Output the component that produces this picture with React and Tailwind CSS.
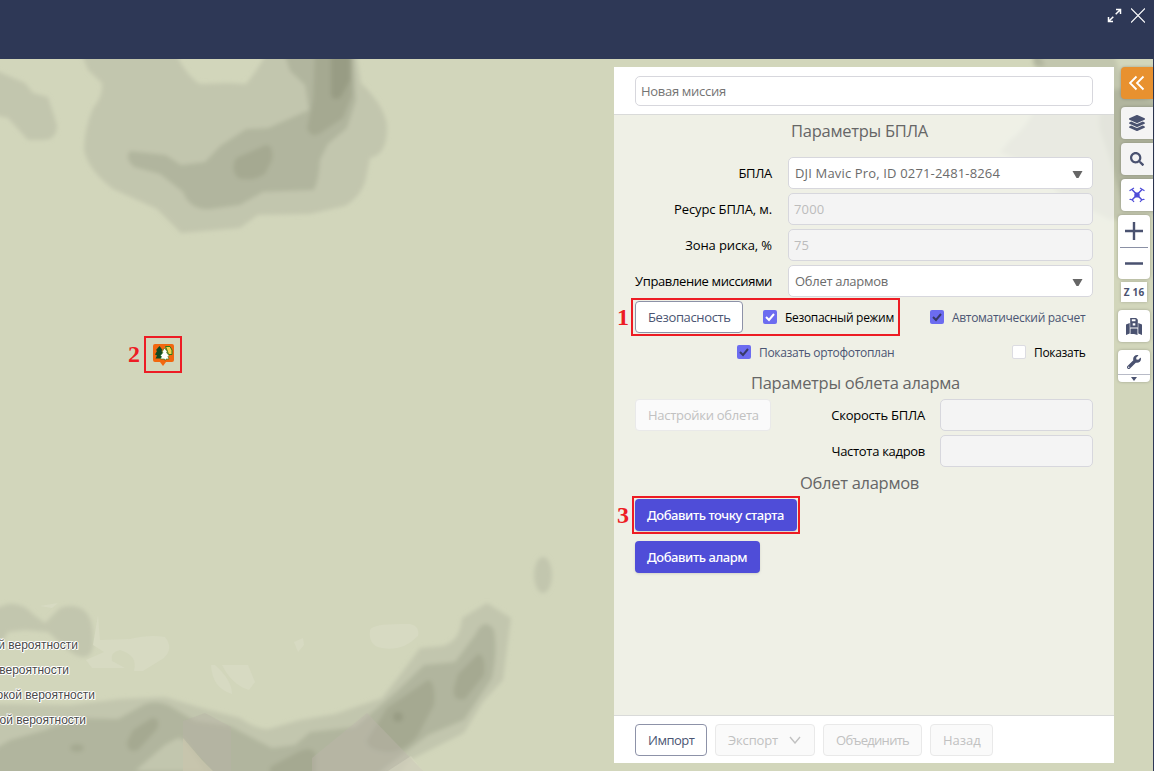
import { FaLayerGroup, FaSearch, FaWrench } from 'react-icons/fa'

function Terrain() {
  return (
    <svg className="absolute inset-0" width="1153" height="712" viewBox="0 59 1153 712" fill="none">
      <defs>
        <filter id="soft" x="-5%" y="-5%" width="110%" height="110%">
          <feGaussianBlur stdDeviation="2" />
        </filter>
      </defs>
      <rect y="59" width="1153" height="712" fill="#d2d6bb" />
      <g filter="url(#soft)">
        <g fill="#c2c6ae">
          <path d="M-10 68 L25 83 L33 93 L48 97 L57 125 Q57 140 43 140 L28 140 L8 118 L-10 114 Z" />
          <path d="M80 50 L88 70 L102 83 Q103 97 93 108 Q84 130 84 150 Q88 170 113 189 L157 209 L181 233 L240 228 L258 215 L310 214 L345 206 Q362 196 366 178 L370 158 Q388 155 387 125 Q384 105 361 83 L356 50 L268 50 Q258 70 246 84 L228 83 L200 84 Q186 76 174 50 Z" />
          <path d="M-10 610 L8 604 Q22 602 34 615 L45 623 L60 608 Q75 603 85 611 Q94 620 93 640 Q94 656 84 657 Q74 657 60 643 L48 632 L25 630 L8 632 L-10 662 Z" />
          <path d="M-10 704 L70 705 L120 699 L165 697 L205 709 L240 718 Q260 732 272 728 L300 720 L335 714 L382 698 L400 675 L420 648 L442 646 Q460 642 462 618 L487 603 L511 618 L503 680 L483 702 L464 733 L440 745 L410 760 L390 785 L-10 785 Z" />
          <ellipse cx="543" cy="575" rx="9" ry="18" />
          <path d="M1035 50 L1038 90 Q1036 120 1010 140 L1000 152 L1030 165 L1060 195 L1110 220 L1165 214 L1165 50 Z" />
        </g>
        <path d="M1112 50 L1120 72 L1165 100 L1165 50 Z" fill="#d2d6bb" />
        <g fill="#b1b59e">
          <path d="M283 50 L290 71 L305 85 L309 110 L268 128 L246 129 L220 146 L205 162 L181 165 L166 155 L130 151 Q124 158 134 167 L160 174 L183 192 Q190 211 211 209 L240 205 L263 192 L314 190 Q319 180 320 160 L328 144 L347 128 L356 100 L353 50 Z" />
          <path d="M-10 752 L10 740 L45 730 L75 718 L118 719 L145 704 Q160 699 175 709 L195 721 L230 726 L272 748 L295 745 L310 732 L355 727 L395 693 L424 665 L455 662 L475 635 Q484 616 494 630 Q498 650 492 678 L464 720 L428 735 L385 768 L365 785 L-10 785 Z" />
          <path d="M1110 90 Q1096 110 1100 130 L1110 160 L1125 210 L1140 205 L1160 170 L1160 105 L1125 88 Z" />
        </g>
        <g fill="#a5a991">
          <path d="M315 50 L313 100 L307 128 Q310 138 319 134 L343 118 L352 95 L352 50 Z" />
          <path d="M236 158 L266 145 Q274 145 272 160 L265 174 Q252 182 238 178 Q230 170 236 158 Z" />
          <path d="M367 740 L387 708 L428 680 Q436 682 434 705 L418 735 Q405 752 388 752 Q366 750 367 740 Z" />
          <path d="M458 674 L478 654 Q486 655 484 675 L465 699 Q452 702 454 688 Z" />
          <path d="M127 742 L133 730 L152 718 Q161 718 157 729 L138 750 Q127 754 127 742 Z" />
          <ellipse cx="77" cy="748" rx="7" ry="4" />
          <path d="M270 767 L298 752 Q312 745 316 755 L316 785 L270 785 Z" />
        </g>
        <g fill="#989c84">
          <path d="M331 50 L331 95 Q334 102 341 97 L350 80 L350 50 Z" />
          <circle cx="398" cy="717" r="5" />
        </g>
        <path d="M135 771 L165 745 L178 738 L184 740 L205 771 Z" fill="#c2c6ae" />
        <path d="M1032 50 L1042 59 L1045 66 L1034 66 Z" fill="#b1b59e" />
      </g>
      <g fill="#d7dac2">
        <path d="M370 630 Q372 623 410 624 Q420 626 418 636 Q402 652 382 648 Q368 646 370 630 Z" />
        <path d="M98 615 L100 640 L130 639 Q150 634 165 637 Q174 648 164 658 L143 671 L134 671 Q138 655 120 650 Q110 652 112 661 L125 668 L92 668 L86 660 L104 652 L93 645 Z" />
        <path d="M211 665 Q212 688 232 694 Q232 680 215 665 Z M222 665 L248 665 L255 682 L249 690 Q232 685 222 665 Z" />
        <path d="M294 642 L303 638 L304 645 L298 652 Z" />
        <path d="M40 606 L58 603 L52 608 Z" />
      </g>
      <path d="M183 721 L205 713 L231 727 L231 771 L213 771 L183 738 Z" fill="#b8b4a6" opacity=".45" />
      <path d="M183 738 L202 760 L213 771 L183 771 Z" fill="#c8c4ad" opacity=".8" />
      <path d="M312 758 L367 713 L423 771 L312 771 Z" fill="#bcb6ab" opacity=".42" />
      <path d="M388 771 L411 756 L423 771 Z" fill="#d8d8c2" opacity=".5" />
    </svg>
  )
}

function Title({ children, className = '' }) {
  return <h2 className={`text-center text-[16.5px] leading-[24px] tracking-[-0.28px] text-[#666] ${className}`}>{children}</h2>
}

function Label({ children, className = '' }) {
  return <span className={`whitespace-nowrap text-right text-black ${className}`}>{children}</span>
}

function Row({ label, className = '', children }) {
  return (
    <div className="flex h-8 items-center justify-between">
      <Label className={`w-[137px] ${className}`}>{label}</Label>
      {children}
    </div>
  )
}

function Select({ children, className = '' }) {
  return (
    <div className="flex h-8 w-[305px] items-center justify-between rounded-[5px] border border-[#d7d7dd] bg-white pr-[9px] pl-[6px] text-[#6b6b6b]">
      <span className={className}>{children}</span>
      <svg width="11" height="8" className="mt-[3px]"><path d="M.5 0h10L6.500 7h-2z" fill="#666" /></svg>
    </div>
  )
}

function Disabled({ children, className = 'w-[305px]' }) {
  return (
    <div className={`flex h-8 items-center rounded-[5px] border border-[#d7d7dd] bg-[#f4f4f4] pl-[5px] tracking-[0.15px] text-[#bcbcbc] ${className}`}>
      {children}
    </div>
  )
}

function Check({ tick, children, className = '', dim }) {
  return (
    <label className={`flex shrink-0 items-center gap-2 whitespace-nowrap text-[12px] tracking-[-0.31px] ${dim ? 'text-[#4b5573]' : 'text-black'} ${className}`}>
      <span className={`flex size-[14px] shrink-0 items-center justify-center rounded-[2px] ${tick ? 'bg-[#6c6cf0]' : 'border border-[#dcdce2] bg-white'}`}>
        {tick && <svg width="10" height="10" fill="none"><path d="M1 5l3 3 5-6" stroke={tick} strokeWidth="2" /></svg>}
      </span>
      <span className="pt-[2px]">{children}</span>
    </label>
  )
}

function Button({ children, className = '', off }) {
  return (
    <button className={`flex h-8 shrink-0 items-center rounded-[4px] border pl-3 whitespace-nowrap ${off ? 'border-[#e9e9e9] bg-[#fafafa] text-[#c1c1c1]' : 'border-[#8d92a8] bg-white text-[#4b5573]'} ${className}`}>
      {children}
    </button>
  )
}

function Primary({ children, className }) {
  return <button className={`flex h-8 items-center rounded-[4px] bg-[#4f4dd8] pl-3 font-['Noto_Sans',sans-serif] font-medium tracking-[-0.43px] whitespace-nowrap text-white shadow-sm ${className}`}>{children}</button>
}

function Tool({ children, className = '' }) {
  return <div className={`flex h-8 w-8 items-center justify-center rounded-l-[4px] text-[#4a5270] shadow-[0_0_3px_rgba(0,0,0,.25)] ${className}`}>{children}</div>
}

function Mark({ children, className }) {
  return <span className={`absolute font-['Liberation_Serif',serif] text-[24px] leading-6 font-bold text-[#ed1c24] ${className}`}>{children}</span>
}

function Panel() {
  return (
    <section className="relative mt-2 flex h-[696px] w-[500px] shrink-0 flex-col">
      <div className="flex h-12 items-start justify-center border-b border-[#d9dad9] bg-white pt-[9px]">
        <div className="flex h-[30px] w-[458px] items-center rounded-[5px] border border-[#d7d7dd] pl-[5px] tracking-[-0.3px] text-[#747474]">Новая миссия</div>
      </div>
      <div className="flex flex-1 flex-col bg-white/64 px-[21px]">
        <Title className="mt-1 mb-[14px] pr-[9px]">Параметры БПЛА</Title>
        <div className="flex flex-col gap-1">
          <Row label="БПЛА"><Select className="tracking-[0.16px]">DJI Mavic Pro, ID 0271-2481-8264</Select></Row>
          <Row label="Ресурс БПЛА, м." className="tracking-[-0.13px]"><Disabled>7000</Disabled></Row>
          <Row label="Зона риска, %" className="tracking-[-0.1px]"><Disabled>75</Disabled></Row>
          <Row label="Управление миссиями" className="tracking-[-0.38px]"><Select>Облет алармов</Select></Row>
          <div className="flex h-8 items-center">
            <Button className="w-[108px] tracking-[-0.36px]">Безопасность</Button>
            <Check tick="#fff" className="ml-5 w-[167px]">Безопасный режим</Check>
            <Check tick="#373a68" dim>Автоматический расчет</Check>
          </div>
        </div>
        <div className="mt-[3px] flex h-8 items-center pl-[102px]">
          <Check tick="#373a68" dim className="w-[275px]">Показать ортофотоплан</Check>
          <Check>Показать</Check>
        </div>
        <Title className="mt-[3px] mb-1 pr-[17px]">Параметры облета аларма</Title>
        <div className="flex justify-between">
          <Button off className="w-[136px] tracking-[-0.28px]">Настройки облета</Button>
          <div className="flex flex-col gap-1">
            <div className="flex items-center gap-[15px]"><Label className="w-[94px] tracking-[-0.22px]">Скорость БПЛА</Label><Disabled className="w-[153px]" /></div>
            <div className="flex items-center gap-[15px]"><Label className="w-[94px]">Частота кадров</Label><Disabled className="w-[153px]" /></div>
          </div>
        </div>
        <Title className="mt-1 mb-1 pr-[9px]">Облет алармов</Title>
        <Primary className="w-[162px]">Добавить точку старта</Primary>
        <Primary className="mt-[10px] w-[125px]">Добавить аларм</Primary>
      </div>
      <div className="flex h-12 items-start gap-2 border-t border-[#d9dad9] bg-white px-[21px] pt-2">
        <Button className="w-[72px] tracking-[-0.5px]">Импорт</Button>
        <Button off className="w-[100px] gap-[11px] tracking-[-0.15px]">
          Экспорт
          <svg width="12" height="8" fill="none"><path d="M1 1l5 6 5-6" stroke="#c1c1c1" strokeWidth="1.4" /></svg>
        </Button>
        <Button off className="w-[99px] tracking-[-0.7px]">Объединить</Button>
        <Button off className="w-[63px] tracking-normal">Назад</Button>
      </div>
      <div className="absolute top-[231px] left-[17px] h-[38px] w-[269px] border-2 border-[#ed1c24]" />
      <Mark className="top-[238px] left-[3px]">1</Mark>
      <div className="absolute top-[429px] left-[18px] h-[38px] w-[168px] border-2 border-[#ed1c24]" />
      <Mark className="top-[436px] left-[3px]">3</Mark>
    </section>
  )
}

function Toolbar() {
  return (
    <aside className="relative flex w-[39px] shrink-0 flex-col items-end pt-2">
      <Tool className="bg-[#e8912f]">
        <svg width="16" height="16" fill="none" stroke="#fff" strokeWidth="1.8"><path d="M7.500 1.500L1 8l6.500 6.500M14.500 1.500L8 8l6.500 6.500" /></svg>
      </Tool>
      <Tool className="mt-2 bg-[#f4f4f4]"><FaLayerGroup size={16} /></Tool>
      <Tool className="mt-1 bg-[#f4f4f4]"><FaSearch size={14} /></Tool>
      <Tool className="mt-1 bg-white">
        <svg width="16" height="16" fill="none" stroke="#4f4dd8" strokeWidth="1.2">
          <path d="M3 2.500l10 10.500M13 2.500L3 13" strokeWidth="1.5" />
          <path d="M6 5.500h4l.8 2.500-.8 2.500H6L5.200 8z" fill="#4f4dd8" stroke="none" />
          <path d="M.5 3.800L5 1M11 1l4.500 2.800M.5 12.500Q3 11.500 5 15M15.500 12.500Q13 11.500 11 15" />
        </svg>
      </Tool>
      <div className="mt-1 mr-[3px] flex w-8 flex-col items-center">
        <div className="flex h-16 w-8 flex-col items-center rounded-[4px] bg-white shadow-[0_0_3px_rgba(0,0,0,.25)]">
          <svg width="28" height="64" stroke="#4a5270"><path d="M5 16h18M14 7v18M5 48.500h18" strokeWidth="2.400" /><path d="M0 32.500h28" stroke="#8a90a5" /></svg>
        </div>
        <div className="mt-[3px] flex h-5 w-[26px] items-center justify-center bg-white text-[10px] font-bold tracking-[0.2px] whitespace-nowrap text-[#4a5270] shadow-[0_0_3px_rgba(0,0,0,.2)]">Z 16</div>
        <div className="mt-2 flex h-8 w-8 items-center justify-center rounded-[4px] bg-white shadow-[0_0_3px_rgba(0,0,0,.25)]">
          <svg width="16" height="17" fill="#4a5270">
            <path d="M0 6.500L3.700 5v10.500L0 17zM4.500 10.500h7V17l-3.500-1-3.500 0zM12.300 5L16 6.500V17l-3.700-1.500z" />
            <path d="M4.200 0h6l1.600 1.700V9.500H4.200z" />
            <path d="M5.800 1.200h3.700v2H5.800zM6.700 5.200h2.600v2.300H6.700z" fill="#fff" />
          </svg>
        </div>
        <div className="mt-2 flex h-8 w-8 flex-col items-center rounded-[4px] bg-white text-[#4a5270] shadow-[0_0_3px_rgba(0,0,0,.25)]">
          <div className="flex h-[24px] items-center"><FaWrench size={14} /></div>
          <div className="flex w-full justify-center border-t border-[#b8bbc7] pt-[2px]">
            <svg width="6" height="4"><path d="M0 0h6L3 4z" fill="#4a5270" /></svg>
          </div>
        </div>
      </div>
    </aside>
  )
}

const legend = [
  ['w-[78px]', 'й вероятности'],
  ['w-[69px]', 'вероятности'],
  ['w-[95px]', 'окой вероятности'],
  ['w-[86px]', 'ой вероятности'],
]

export default function App() {
  return (
    <div className="flex h-[771px] w-[1155px] overflow-hidden bg-white font-['Open_Sans','Noto_Sans',sans-serif] text-[13px] leading-5 tracking-[-0.3px]">
      <div className="flex w-[1154px] flex-col border-r border-[#2e3856]">
        <header className="flex h-[59px] items-start justify-end gap-[9px] bg-[#2e3856] pt-2 pr-2">
          <svg width="15" height="15" fill="none" stroke="#fff" strokeWidth="1.5">
            <path d="M9 1.500h4.500V6M13.500 1.500L8.700 6.300M1.500 9v4.500H6M1.500 13.500l4.800-4.800" />
          </svg>
          <svg width="14" height="15" fill="none" stroke="#fff" strokeWidth="1.2"><path d="M0 .5l14 14M14 .5l-14 14" /></svg>
        </header>
        <main className="relative flex flex-1">
          <Terrain />
          <div className="relative flex-1">
            <Mark className="top-[283px] left-[128px]">2</Mark>
            <div className="absolute top-[277px] left-[144px] flex h-[37px] w-[38px] items-start justify-center border-2 border-[#ed1c24] pt-[6px]">
              <svg width="23" height="23">
                <path d="M3 0h17q2 0 2 2v14q0 2-2 2h-6l-3 4-3-4H3q-2 0-2-2V2q0-2 2-2z" fill="#f2670f" />
                <path d="M13.500 2.500h4.500l2 3.500v4.500h-3.500l-1-3z" fill="#f3cf4a" stroke="#2c7a1d" />
                <path d="M7.500 2l3 4-1 1 2 3-1.500 1 1.500 3.500H3.500L5 11.500l-2-1 2-3.500-1-1z" fill="#0f4a24" />
                <path d="M12.500 4l3 4-1 .5 2.500 3-1 1 1 2.500h-3v1h-1.500v-1H8.500l1-2.500-1-1 2.500-3-1-.5z" fill="#fff" stroke="#2c7a1d" strokeWidth=".6" />
              </svg>
            </div>
            <ul className="mt-[576px] flex flex-col gap-[5px] font-['Liberation_Sans',sans-serif] text-[12px] tracking-normal text-[#4a4a4a] [text-shadow:1px_0_#fff,-1px_0_#fff,0_1px_#fff,0_-1px_#fff,1px_1px_#fff,-1px_-1px_#fff]">
              {legend.map(([w, t]) => (
                <li key={t} className={`flex justify-end whitespace-nowrap ${w}`}>{t}</li>
              ))}
            </ul>
          </div>
          <Panel />
          <Toolbar />
        </main>
      </div>
    </div>
  )
}
